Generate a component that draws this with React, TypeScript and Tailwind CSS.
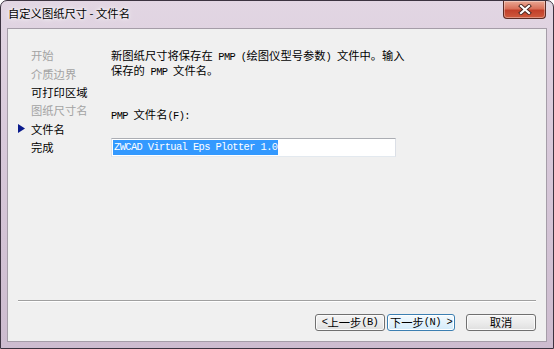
const cjk = "font-['Noto_Sans_CJK_SC',sans-serif] text-[11.3px]";
const mono = "font-['Liberation_Mono',monospace] text-[10.4px] tracking-[-0.6px]";

const steps = [
  { label: "开始", done: false },
  { label: "介质边界", done: false },
  { label: "可打印区域", done: true },
  { label: "图纸尺寸名", done: false },
  { label: "文件名", done: true, current: true },
  { label: "完成", done: true },
];

function CloseButton() {
  return (
    <div className="flex h-[18px] w-[43px] items-center justify-center rounded-b-[4px] border border-t-0 border-[#5b2b24] bg-[linear-gradient(180deg,#eaa894_0%,#d9715a_45%,#c2402a_55%,#cf5a3d_100%)] shadow-[inset_0_0_0_1px_rgba(255,255,255,0.35)]">
      <svg width="14" height="11" viewBox="0 0 14 11">
        <path d="M3 2 L11 9 M11 2 L3 9" stroke="#4a2620" strokeWidth="4" strokeLinecap="square" fill="none" />
        <path d="M3 2 L11 9 M11 2 L3 9" stroke="#ffffff" strokeWidth="2.2" strokeLinecap="square" fill="none" />
      </svg>
    </div>
  );
}

function WizButton({ children, primary }: { children: React.ReactNode; primary?: boolean }) {
  return (
    <button
      className={
        primary
          ? "flex h-[17px] w-[68px] items-center justify-center rounded-[3px] border border-[#3c7fb1] bg-[linear-gradient(180deg,#f4fafe_0%,#e4f3fc_50%,#d2ebfa_100%)] leading-none text-black shadow-[inset_0_0_0_1px_#ffffff]"
          : "flex h-[17px] w-[70px] items-center justify-center rounded-[3px] border border-[#707070] bg-[linear-gradient(180deg,#f4f4f4_0%,#ececec_50%,#dfdfdf_100%)] leading-none text-black shadow-[inset_0_0_0_1px_#fbfbfb]"
      }
    >
      {children}
    </button>
  );
}

export default function App() {
  return (
    <div className="flex h-[349px] w-[554px] flex-col rounded-t-[7px] border border-[#3c3340] bg-[linear-gradient(180deg,#e2d6e3_0%,#d8c9da_40%,#cdbccf_100%)] px-[6px] pb-[6px]">
      {/* title bar */}
      <div className="flex h-[27px] shrink-0 items-start justify-between pl-[1px] pr-[1px]">
        <span className={`${cjk} mt-[5px] leading-[14px] text-black [text-shadow:0_0_6px_#ffffff,0_0_3px_#ffffff]`}>
          自定义图纸尺寸 - 文件名
        </span>
        <CloseButton />
      </div>

      {/* client */}
      <div className="flex flex-1 flex-col border border-[#a59da8] bg-[#f0f0f0]">
        <div className="flex flex-1">
          <ul className="w-[103px] shrink-0 pl-[10px] pt-[17px]">
            {steps.map((s) => (
              <li key={s.label} className="flex h-[18.4px] items-center">
                <span className="flex w-[13px] items-center">
                  {s.current && (
                    <svg width="7" height="9" viewBox="0 0 7 9">
                      <path d="M0 0 L7 4.5 L0 9 Z" fill="#0a1a8c" />
                    </svg>
                  )}
                </span>
                <span className={`${cjk} leading-[14px] ${s.done ? "text-black" : "text-[#a3a3a3]"}`}>{s.label}</span>
              </li>
            ))}
          </ul>

          <div className="flex flex-col pt-[20px]">
            <p className={`${cjk} leading-[12.5px] text-black`}>
              新图纸尺寸将保存在<span className={mono}> PMP (</span>绘图仪型号参数<span className={mono}>) </span>文件中。输入
            </p>
            <p className={`${cjk} leading-[12.5px] text-black`}>
              保存的<span className={mono}> PMP </span>文件名。
            </p>
            <p className={`${cjk} mt-[30px] leading-[12.5px] text-black`}>
              <span className={mono}>PMP </span>文件名<span className={mono}>(F):</span>
            </p>
            <div className="mt-[15px] flex h-[19px] w-[285px] items-center border border-[#abadb3] border-x-[#dbdfe6] border-b-[#e3e9ef] bg-white pl-[1px]">
              <span className="bg-[#3399ff] px-[1px] font-['Liberation_Mono',monospace] text-[10.4px] leading-[15px] tracking-[-0.6px] text-white">
                ZWCAD Virtual Eps Plotter 1.0
              </span>
            </div>
          </div>
        </div>

        {/* footer */}
        <div className="mx-[10px] h-[2px] border-t border-[#a0a0a0] border-b border-b-white" />
        <div className="flex items-center justify-end pb-[10px] pr-[10px] pt-[12px]">
          <WizButton>
            <span className={mono}>&lt; </span>
            <span className={cjk}>上一步</span>
            <span className={mono}>(B)</span>
          </WizButton>
          <div className="w-[2px]" />
          <WizButton primary>
            <span className={cjk}>下一步</span>
            <span className={mono}>(N) &gt;</span>
          </WizButton>
          <div className="w-[11px]" />
          <WizButton>
            <span className={cjk}>取消</span>
          </WizButton>
        </div>
      </div>
    </div>
  );
}
